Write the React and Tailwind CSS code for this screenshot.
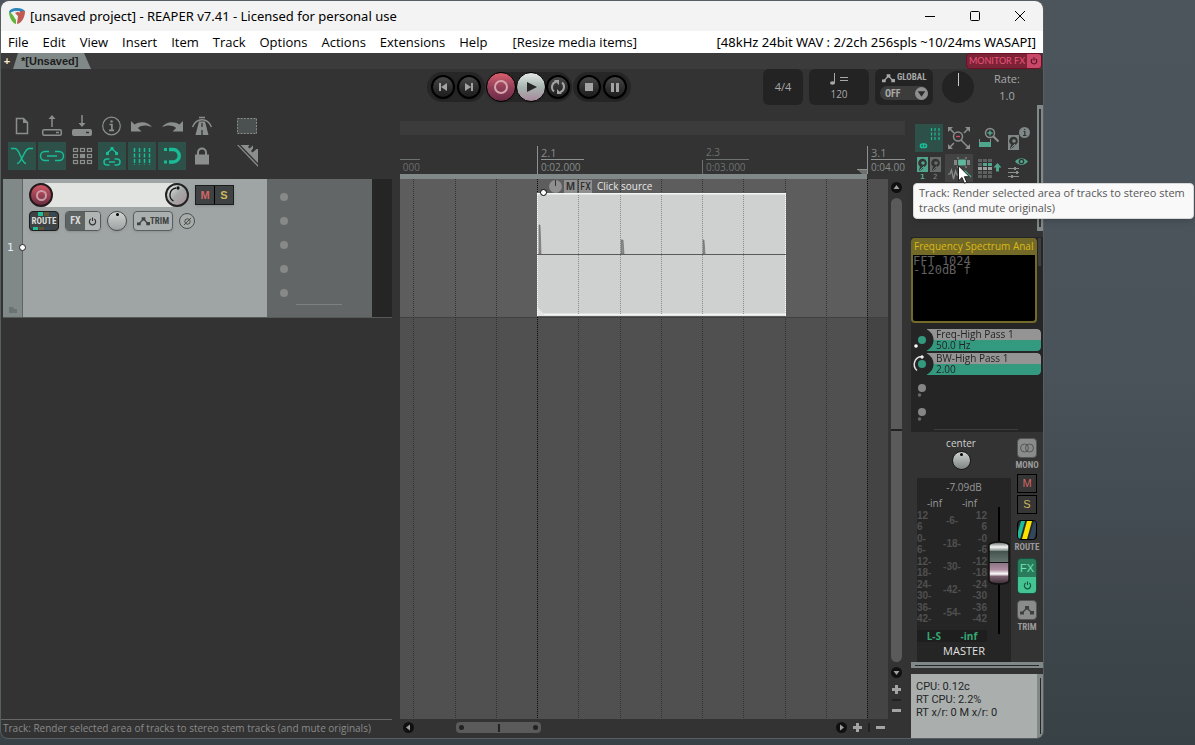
import React, { useState } from 'react';

// ============================================================================
// SHARED DATA
// ============================================================================
const MENUS = ['File', 'Edit', 'View', 'Insert', 'Item', 'Track', 'Options', 'Actions', 'Extensions', 'Help'];
const GRID = [13, 55, 96, 137, 178, 220, 261, 302, 343, 385, 426, 467];
const SCALE_LEFT = ['12', '6', '0-', '6-', '12-', '18-', '24-', '30-', '36-', '42-'];
const SCALE_MID = ['-6-', '-18-', '-30-', '-42-', '-54-'];
const SCALE_RIGHT = ['12', '6', '-0', '-6', '-12', '-18', '-24', '-30', '-36', '-42'];

const UI = "font-['Open_Sans',sans-serif]";
const NARROW = "font-['Liberation_Sans_Narrow','Roboto_Condensed','Open_Sans_Condensed','DejaVu_Sans_Condensed',sans-serif]";

// ============================================================================
// ICONS
// ============================================================================
const Icon = ({ children }) => (
    <svg viewBox="0 0 28 28" className="block h-7 w-7" fill="none" stroke="currentColor" strokeWidth="1.5" aria-hidden="true">
        {children}
    </svg>
);

const icons = {
    newFile: <Icon><path d="M8.5 6.5h7l4 4v11h-11z" /><path d="M15 6v5h5z" fill="currentColor" stroke="none" /></Icon>,
    open: (
        <Icon>
            <rect x="4.7" y="17.7" width="18.6" height="5.6" rx="1.5" />
            <path d="M14 15V6M18 20.5h3" /><path d="M14 3l-3.5 4h7z" fill="currentColor" stroke="none" />
        </Icon>
    ),
    save: (
        <Icon>
            <rect x="4" y="17" width="20" height="7" rx="2" fill="currentColor" stroke="none" />
            <path d="M14 3v9" /><path d="M14 15l-3.5-4h7z" fill="currentColor" stroke="none" /><path d="M18 20.5h3" stroke="#333" />
        </Icon>
    ),
    info: (
        <Icon>
            <circle cx="13.5" cy="14" r="8.8" strokeWidth="1.2" />
            <path d="M11.5 12.5h2.4v5.5M11 18.4h5" strokeWidth="1.7" /><circle cx="13.6" cy="9.4" r="1.2" fill="currentColor" stroke="none" />
        </Icon>
    ),
    undo: <Icon><path d="M3 9v10.500h10.500l-3.600-3.600c4-3.200 9-3 14.100-.9c-4-5.500-12-6.300-17.400-2.400z" fill="currentColor" stroke="none" /></Icon>,
    redo: <Icon><path d="M25 9v10.500h-10.500l3.600-3.600c-4-3.200-9-3-14.100-.9c4-5.500 12-6.300 17.400-2.400z" fill="currentColor" stroke="none" /></Icon>,
    metronome: (
        <Icon>
            <path d="M11 9.500h6l3.500 13.500h-13z" fill="currentColor" stroke="none" />
            <path d="M14 11v4M14 18v5" stroke="#333" strokeWidth="1.3" />
            <path d="M11 5.500h6M4.500 15c2-5 5-7.300 9.500-7.300s7.500 2.300 9.500 7.300" strokeWidth="1.400" />
        </Icon>
    ),
    marquee: <Icon><rect x="4.500" y="6.500" width="19" height="15" fill="#4b5150" strokeWidth="1" strokeDasharray="2 1.200" /></Icon>,
    crossfade: <Icon><path d="M3 6.500h4c5 0 6 15 11 15M25 6.500h-4c-5 0-7 15-12 15" /></Icon>,
    link: <Icon><path d="M11 9.500H7a4.200 4.200 0 000 9h4M17 9.500h4a4.200 4.200 0 010 9h-4M9 14h10" /></Icon>,
    matrix: (
        <Icon>
            {[6, 12, 18].map((y) => [5, 12, 19].map((x) => (
                <rect key={`${x}-${y}`} x={x + 0.5} y={y + 0.5} width="4" height="3" strokeWidth="1.200" fill={x === 12 && y === 12 ? 'currentColor' : 'none'} />
            )))}
        </Icon>
    ),
    envelope: (
        <Icon>
            <path d="M9 11l5-4 5 4" /><path d="M8 10h3v3H8zM12.500 5h3v3h-3zM17 10h3v3h-3z" fill="currentColor" stroke="none" />
            <path d="M11.500 17H9a3 3 0 000 6h2.500M16.500 17H19a3 3 0 010 6h-2.500M11 20h6" />
        </Icon>
    ),
    grid: <Icon><path d="M6.500 6v17M11.500 6v17M16.500 6v17M21.500 6v17" strokeDasharray="4 1.500" /></Icon>,
    snap: <Icon><path d="M11 7.500h4a6.200 6.200 0 010 12.500h-4" strokeWidth="3.400" /><path d="M6 6h3v3H6zM6 18.500h3v3H6z" fill="currentColor" stroke="none" /></Icon>,
    lock: <Icon><rect x="7" y="12.500" width="14" height="10" fill="currentColor" stroke="none" /><path d="M10 13v-2.500a4 4 0 018 0V13" strokeWidth="2" /></Icon>,
    ruler: (
        <Icon>
            <path d="M7.500 3h9l-1.500 2 1.500 1.500 3.500-3v3l-2 2.500 1.500 1.500 4-3.500h1.500v14z" fill="currentColor" stroke="none" />
            <path d="M4 3h1.500L25 23v2z" fill="currentColor" stroke="none" />
        </Icon>
    ),
};

const Disk = ({ x, y, color }) => (
    <g transform={`translate(${x} ${y})`} stroke="none">
        <rect width="11" height="15" fill={color} />
        <circle cx="5.500" cy="6" r="4.300" fill="#333" />
        <circle cx="6" cy="6" r="1.800" fill={color} />
        <path d="M2 13.500l1-4 3.500 1.500-3 2.500z" fill="#333" />
        <path d="M3 13l4-4" stroke={color} strokeWidth="1" />
    </g>
);

const dockIcons = {
    gridLink: (
        <Icon>
            <path d="M16.500 4v12M20 4v12M24 4v12" strokeDasharray="3 1.500" stroke="#1abc98" strokeWidth="1.200" />
            <rect x="5.500" y="20" width="6" height="3.500" rx="1.700" stroke="#1abc98" strokeWidth="1.700" /><path d="M8.500 20v4" stroke="#1abc98" />
        </Icon>
    ),
    zoomOut: (
        <Icon>
            <circle cx="13" cy="12.500" r="4.500" /><path d="M11 12.500h4" stroke="#d04a65" strokeWidth="1.300" />
            <path d="M16 16l3.500 3.500M4 4l5 5M24 4l-5 5M4 24l5-5M24 24l-5-5" />
            <path d="M3 3h5l-5 5zM25 3h-5l5 5zM3 25h5l-5-5zM25 25h-5l5-5z" fill="currentColor" stroke="none" />
        </Icon>
    ),
    zoomIn: (
        <Icon>
            <circle cx="15" cy="9" r="4.500" /><path d="M12.500 9h5M15 6.500v5" stroke="#50a58d" />
            <path d="M18.500 12.500l5 5" strokeWidth="2.200" /><path d="M4.500 15v3M15.500 15v3" strokeWidth="1" />
            <rect x="4" y="18" width="12" height="5" fill="#50a58d" stroke="none" />
        </Icon>
    ),
    diskInfo: (
        <Icon>
            <Disk x={3} y={11} color="#7f8886" /><circle cx="19.500" cy="8.500" r="5.500" fill="#7f8886" stroke="none" />
            <path d="M18.500 7.500h1.300v4M18 11.500h3.500M19 5.500h1.200" stroke="#333" strokeWidth="1.200" />
        </Icon>
    ),
    disks: (
        <Icon>
            <Disk x={2} y={3} color="#50a58d" /><Disk x={15} y={3} color="#666c6a" />
            <text x="5" y="25" fontSize="7" fontFamily="DejaVu Sans" fontWeight="bold" fill="#50a58d" stroke="none">1</text>
            <text x="18" y="25" fontSize="7" fontFamily="DejaVu Sans" fill="#888" stroke="none">2</text>
        </Icon>
    ),
    render: (
        <Icon>
            <rect x="9" y="6" width="16" height="5" fill="#7f8886" stroke="none" /><rect x="13.500" y="5.500" width="7" height="6" fill="#5bb89d" stroke="none" />
            <path d="M12.500 6v5M21.500 6v5" stroke="#434343" strokeWidth="1" />
            <path d="M13 3v2M13 12v2M21 3v2M21 12v2" strokeWidth="1.200" />
            <path d="M3 20h2l1.500-4 2 9 2-8 1.500 4h3" strokeWidth="1.200" />
            <path d="M17 19c5-5 5 5 9 3" stroke="#50a58d" strokeWidth="2" />
        </Icon>
    ),
    list: (
        <Icon>
            {[5, 9, 13, 17, 21].map((y, i) => [3, 8, 13].map((x) => (
                <rect key={`${x}-${y}`} x={x} y={y} width="4" height="3" stroke="none" fill={i === 1 && x > 3 ? '#50a58d' : i === 2 ? '#9a9f9e' : '#5c6160'} />
            )))}
            <path d="M22.500 9l-4 4.500h2.500v4h3v-4h2.500z" fill="#50a58d" stroke="none" />
        </Icon>
    ),
    visible: (
        <Icon>
            <path d="M10 7.500c4-4.500 9-4.500 13 0c-4 4.500-9 4.500-13 0z" fill="#50a58d" stroke="none" /><circle cx="16.500" cy="7.500" r="2.800" fill="#333" stroke="none" />
            <circle cx="16.500" cy="7.500" r="1.500" fill="#50a58d" stroke="none" />
            <path d="M3 14.500h11M3 18.500h11M3 22.500h11" strokeWidth="1.200" /><path d="M9 13h2v3H9zM11 17h2v3h-2zM6 21h2v3H6z" fill="currentColor" stroke="none" />
        </Icon>
    ),
};

const Power = ({ className }) => (
    <svg viewBox="0 0 10 10" className={className} fill="none" stroke="currentColor" strokeWidth="1.300" aria-hidden="true">
        <path d="M3 2.300a3.500 3.500 0 104 0M5 .5v4" />
    </svg>
);

const Trim = ({ className }) => (
    <svg viewBox="0 0 14 10" className={className} aria-hidden="true">
        <path d="M2 8l5-5 5 5" fill="none" stroke="currentColor" strokeWidth="1.300" />
        <path d="M0 6.500h4v3H0zM5 1h4v3.500H5zM10 6h4v3.500h-4z" fill="currentColor" />
    </svg>
);

const Logo = () => (
    <svg viewBox="0 0 16 16" className="h-4 w-4" aria-hidden="true">
        <path d="M0 4C1 1 4 0 8 0s6 1 8 3l-3 3C9 3 5 3 1 6z" fill="#2c86b8" />
        <path d="M0 4c2 0 4 3 7 8v4C3 15 0 9 0 4z" fill="#62b53a" />
        <path d="M16 3c0 6-3 12-8 13L9 8l-3-3c4-2 7-2 10-2z" fill="#bf5b50" />
        <path d="M2 5c3-2 6-2 9-1" stroke="#fff" strokeWidth="1" fill="none" />
    </svg>
);

// ============================================================================
// TITLE BAR AND MENU
// ============================================================================
const TitleBar = () => (
    <header className="flex h-[30px] items-center bg-[#f3f3f3] pl-2 text-black">
        <Logo />
        <h1 className="ml-[5px] flex-1 whitespace-nowrap font-['Noto_Sans',sans-serif] text-[13px] leading-5">[unsaved project] - REAPER v7.41 - Licensed for personal use</h1>
        <div className="flex">
            <button aria-label="Minimize" className="grid h-7 w-[45px] place-items-center">
                <svg viewBox="0 0 12 12" className="h-3 w-3" stroke="currentColor"><path d="M1 6.500h10" /></svg>
            </button>
            <button aria-label="Maximize" className="grid h-7 w-[45px] place-items-center">
                <svg viewBox="0 0 12 12" className="h-3 w-3" stroke="currentColor" fill="none"><rect x="1.500" y="1.500" width="9" height="9" rx="1" /></svg>
            </button>
            <button aria-label="Close" className="grid h-7 w-[46px] place-items-center">
                <svg viewBox="0 0 12 12" className="h-3 w-3" stroke="currentColor"><path d="M1 1l10 10M11 1L1 11" /></svg>
            </button>
        </div>
    </header>
);

const MenuBar = () => (
    <nav className={`flex h-[22px] items-center gap-[14px] whitespace-nowrap bg-white px-[7px] text-[13px] leading-5 text-black ${UI}`}>
        {MENUS.map((m) => <button key={m}>{m}</button>)}
        <button className="ml-[11px]">[Resize media items]</button>
        <button className="ml-auto font-['Noto_Sans',sans-serif]">[48kHz 24bit WAV : 2/2ch 256spls ~10/24ms WASAPI]</button>
    </nav>
);

const TabBar = () => (
    <div className="flex h-4 items-stretch bg-[#3b3b3b]">
        <button aria-label="New project tab" className="w-3 text-center text-[11px] font-bold leading-4 text-[#ffe9c8]">+</button>
        <button className="h-4 w-[78px] bg-[#808987] pl-2 text-left font-['Liberation_Sans',sans-serif] text-[11px] font-bold leading-4 text-[#1c1c1c] [clip-path:polygon(5px_0,71px_0,100%_100%,0_100%)]">
            *[Unsaved]
        </button>
        <div className="ml-auto mr-px flex overflow-hidden rounded-sm border border-[#6d0f26] bg-[#7c2338] text-[#e8557a]">
            <button className="px-[2px] font-['Lato',sans-serif] text-[9px] leading-[14px]">MONITOR FX</button>
            <button aria-label="Monitor FX bypass" className="grid w-[14px] place-items-center bg-[#c8486a] text-[#4e0c1c]"><Power className="h-2 w-2" /></button>
        </div>
    </div>
);

// ============================================================================
// TRANSPORT
// ============================================================================
const RoundButton = ({ label, big, tone, children }) => (
    <button
        aria-label={label}
        className={`grid shrink-0 place-items-center rounded-full border-black shadow ${big ? 'h-[30px] w-[30px] border' : 'h-6 w-6 border-2'} ${tone || 'bg-gradient-to-b from-[#464646] to-[#1c1c1c] text-[#a3a3a3]'}`}
    >
        {children}
    </button>
);

const Transport = () => (
    <div className="flex h-9 items-center">
        <div className="ml-[426px] flex h-[30px] items-center gap-[2px] rounded-full bg-[#262626] px-1">
            <RoundButton label="Go to start"><svg viewBox="0 0 10 10" className="h-[10px] w-[10px]" fill="currentColor"><path d="M1 1h2v8H1zM9 1v8L3 5z" /></svg></RoundButton>
            <RoundButton label="Go to end"><svg viewBox="0 0 10 10" className="h-[10px] w-[10px]" fill="currentColor"><path d="M7 1h2v8H7zM1 1v8l6-4z" /></svg></RoundButton>
        </div>
        <div className="ml-px flex h-[30px] items-center rounded-full bg-[#262626] pr-[2px]">
            <RoundButton label="Record" big tone="bg-gradient-to-b from-[#d9606c] via-[#93405a] to-[#6a2b45] text-[#d7a5ae]">
                <svg viewBox="0 0 16 16" className="h-4 w-4" fill="none" stroke="currentColor" strokeWidth="2"><circle cx="8" cy="8" r="6" /></svg>
            </RoundButton>
            <RoundButton label="Play" big tone="bg-gradient-to-b from-[#e6eae8] via-[#a7b5b0] to-[#a88a9c] text-[#262626]">
                <svg viewBox="0 0 12 12" className="h-3 w-3" fill="currentColor"><path d="M2 1l10 5-10 5z" /></svg>
            </RoundButton>
            <RoundButton label="Repeat">
                <svg viewBox="0 0 16 16" className="h-4 w-4" fill="none" stroke="currentColor" strokeWidth="2">
                    <path d="M4 12.500A5.600 5.600 0 016 2.800M12 3.500a5.600 5.600 0 01-2 9.700" /><path d="M4 1h5v5zM12 15H7v-5z" fill="currentColor" stroke="none" />
                </svg>
            </RoundButton>
        </div>
        <div className="ml-px flex h-[30px] items-center gap-[2px] rounded-full bg-[#262626] px-1">
            <RoundButton label="Stop"><span className="h-2 w-2 bg-current" /></RoundButton>
            <RoundButton label="Pause"><span className="h-[9px] w-2 border-x-[3px] border-current" /></RoundButton>
        </div>
        <div className={`ml-auto mr-[20px] flex items-center gap-[6px] text-[#a8a8a8] ${UI}`}>
            <button className="h-9 w-10 rounded-md bg-[#232323] text-[11px]">4/4</button>
            <button className="flex h-9 w-[60px] flex-col items-center rounded-md bg-[#232323] pt-1 text-[10px] leading-[14px]">
                <svg viewBox="0 0 20 12" className="h-3 w-5" fill="none" stroke="currentColor" aria-hidden="true">
                    <path d="M5.500 0v10M11 4.500h8M11 7.500h8" /><ellipse cx="3.500" cy="10" rx="2.500" ry="1.800" fill="currentColor" stroke="none" />
                </svg>
                <span className="pt-[2px]">120</span>
            </button>
            <div className={`flex h-9 w-[58px] flex-col rounded-md bg-[#232323] px-[5px] pt-[2px] text-[10px] font-bold leading-[13px] ${NARROW}`}>
                <span className="flex items-center gap-[2px] pl-[2px] text-[9px]"><Trim className="h-[10px] w-[13px]" />GLOBAL</span>
                <button className="mt-[2px] flex h-[14px] items-center justify-between rounded-full bg-[#3c3c3c] pl-[5px]">
                    OFF
                    <svg viewBox="0 0 12 12" className="h-[13px] w-[13px]" aria-hidden="true"><circle cx="6" cy="6" r="6" fill="#8f8f8f" /><path d="M2.500 4h7L6 9z" fill="#2b2b2b" /></svg>
                </button>
            </div>
            <button aria-label="Play rate knob" className="ml-[3px] flex h-8 w-8 justify-center rounded-full bg-[#232323] pt-[2px]"><span className="h-[13px] w-px bg-[#c8c8c8]" /></button>
            <div className="ml-[11px] w-8 text-center text-[11px] leading-[17px]">
                <p>Rate:</p>
                <p>1.0</p>
            </div>
        </div>
    </div>
);

// ============================================================================
// MAIN TOOLBAR
// ============================================================================
const ToolButton = ({ name, label, active, className = '' }) => (
    <button aria-label={label} className={`h-7 w-7 ${active ? 'bg-[#2d5148] text-[#1abc98]' : 'text-[#8a8f8e]'} ${className}`}>
        {icons[name]}
    </button>
);

const Toolbar = () => (
    <div className="flex flex-col gap-[2px] pb-[9px] pl-[7px] pt-[7px]">
        <div className="flex gap-[2px]">
            <ToolButton name="newFile" label="New project" />
            <ToolButton name="open" label="Open project" />
            <ToolButton name="save" label="Save project" />
            <ToolButton name="info" label="Project settings" />
            <ToolButton name="undo" label="Undo" />
            <ToolButton name="redo" label="Redo" />
            <ToolButton name="metronome" label="Metronome" />
            <ToolButton name="marquee" label="Marquee selection" className="ml-[15px]" />
        </div>
        <div className="flex gap-[2px]">
            <ToolButton name="crossfade" label="Auto-crossfade" active />
            <ToolButton name="link" label="Item grouping" active />
            <ToolButton name="matrix" label="Ripple editing" />
            <ToolButton name="envelope" label="Move envelope points" active />
            <ToolButton name="grid" label="Grid lines" active />
            <ToolButton name="snap" label="Snap" active />
            <ToolButton name="lock" label="Locking" />
            <ToolButton name="ruler" label="Razor edit" className="ml-[15px]" />
        </div>
    </div>
);

// ============================================================================
// TRACK PANEL
// ============================================================================
const TrackPanel = () => {
    const [name, setName] = useState('');
    return (
        <section className="ml-[2px] mr-2 flex h-[139px] border-b border-[#555a59]">
            <div className="relative flex w-[19px] flex-col justify-between bg-[#808987] pb-1">
                <span className="pl-1 pt-[61px] font-['DejaVu_Sans',sans-serif] text-[11px] leading-4 text-[#e4ecf8]">1</span>
                <svg viewBox="0 0 8 6" className="ml-[6px] h-[6px] w-2" aria-hidden="true"><path d="M0 0h4l1 2h3v4H0z" fill="#6a7371" /></svg>
                <span className="absolute -right-1 top-[65px] h-[7px] w-[7px] rounded-full border border-[#222] bg-white" />
            </div>
            <div className="flex-1 border-l border-[#5f6463] bg-[#9fa5a4] pl-[6px] pt-1">
                <div className="flex items-center">
                    <button aria-label="Record arm" className="relative z-10 grid h-6 w-6 shrink-0 place-items-center rounded-full border-2 border-[#251a1e] bg-gradient-to-b from-[#d25766] to-[#6a2f42]">
                        <span className="h-[11px] w-[11px] rounded-full border-2 border-[#c99ba6]" />
                    </button>
                    <input aria-label="Track name" value={name} onChange={(e) => setName(e.target.value)} className="-mx-2 h-6 w-32 bg-[#e2e4e2] px-3 text-xs outline-none" />
                    <button aria-label="Track volume" className="relative h-6 w-6 shrink-0 rounded-full border-2 border-[#232323] bg-gradient-to-br from-[#f0f4f2] via-[#a5a9a8] to-[#a88f98]">
                        <svg viewBox="0 0 20 20" className="h-5 w-5" fill="none" stroke="#111" strokeWidth="1.300"><path d="M9 3a7 7 0 00-2.500 13" /><circle cx="11" cy="3" r="1" fill="#111" /></svg>
                    </button>
                    <div className="ml-[6px] flex h-5 border border-[#1c1e1e] bg-[#3e4242] text-[11px] font-bold leading-[18px] shadow">
                        <button className="w-[19px] border-r border-black text-[#d56565]">M</button>
                        <button className="w-[18px] text-[#cdb95c]">S</button>
                    </div>
                </div>
                <div className={`mt-1 flex items-center gap-[6px] text-[10px] font-bold leading-[18px] ${NARROW}`}>
                    <button className="relative h-5 w-[30px] overflow-hidden rounded-sm border border-[#1c1e1e] bg-[#3e4242] text-[9px] text-[#d9dcdb] shadow">
                        <span className="absolute left-2 top-0 h-1 w-[5px] bg-[#20bd9b]" />
                        <span className="absolute left-[14px] top-0 h-1 w-[5px] bg-[#5f5532]" />
                        <span className="absolute left-5 top-0 h-1 w-[5px] bg-[#34495a]" />
                        <span className="absolute bottom-0 left-[3px] h-[3px] w-[5px] bg-[#20bd9b]" />
                        <span className="absolute bottom-0 left-[9px] h-[3px] w-[5px] bg-[#5f5532]" />
                        <span className="absolute bottom-0 left-[15px] h-[3px] w-[5px] bg-[#34495a]" />
                        <span className="relative">ROUTE</span>
                    </button>
                    <div className="flex h-5 overflow-hidden rounded-sm border border-[#555a59] shadow">
                        <button className="w-[19px] bg-[#5d6262] text-[#d9dcdb]">FX</button>
                        <button aria-label="FX bypass" className="grid w-[15px] place-items-center bg-[#b1b6b5] text-[#333]"><Power className="h-[9px] w-[9px]" /></button>
                    </div>
                    <button aria-label="Track pan" className="flex h-5 w-5 justify-center rounded-full border border-[#4a4f4e] bg-gradient-to-b from-[#d0d5d3] to-[#9da3a1] pt-[1px] shadow"><span className="h-[3px] w-[3px] rounded-full bg-black" /></button>
                    <button className="flex h-5 w-10 items-center justify-center rounded-sm border border-[#5a5f5e] bg-[#aab0af] text-[9px] text-[#3f4443] shadow"><Trim className="h-[10px] w-[13px]" />TRIM</button>
                    <button aria-label="Phase invert" className="grid h-4 w-4 place-items-center rounded-full border border-[#4a4f4e] bg-[#a7adab] text-[#3f4443]">
                        <svg viewBox="0 0 10 10" className="h-[9px] w-[9px]" fill="none" stroke="currentColor"><circle cx="5" cy="5" r="3" /><path d="M1 9l8-8" /></svg>
                    </button>
                </div>
            </div>
            <div className="flex w-[105px] flex-col bg-[#626666] pl-[13px] pt-[14px]">
                <div className="flex flex-col gap-4">
                    {[0, 1, 2, 3, 4].map((n) => <span key={n} className="h-2 w-2 rounded-full bg-[#878988]" />)}
                </div>
                <span className="ml-4 mt-[7px] h-px w-[46px] bg-[#7b8180]" />
            </div>
            <div className="w-5 bg-[#252525]" />
        </section>
    );
};

// ============================================================================
// TIMELINE
// ============================================================================
const Ruler = () => (
    <div className={`flex h-7 overflow-hidden text-[10px] text-[#878c8a] ${UI}`}>
        <div className="w-[137px] shrink-0 pt-[13px]"><p className="w-5 border-t border-[#6c7170] text-right leading-[14px] text-[#6c6c6c]">000</p></div>
        <div className="w-[165px] shrink-0 border-l border-[#8d9290] pl-[3px]">
            <p className="w-[43px] border-b border-[#8d9290] text-[11px] leading-[13px]">2.1</p>
            <p className="leading-[14px]">0:02.000</p>
        </div>
        <div className="flex w-[165px] shrink-0 items-end">
            <span className="h-[14px] w-px bg-[#6c7170]" />
            <div className="h-7 pl-[3px] text-[#6c7170]">
                <p className="w-[43px] border-b border-[#6c7170] leading-[13px]">2.3</p>
                <p className="leading-[14px]">0:03.000</p>
            </div>
            <svg viewBox="0 0 10 5" className="ml-auto h-[5px] w-[10px]" aria-hidden="true"><path d="M0 0h10v5H5z" fill="#6c7170" /><path d="M0 .5h10" stroke="#8d9290" /></svg>
        </div>
        <div className="min-w-0 flex-1 border-l border-[#8d9290] pl-[3px]">
            <p className="border-b border-[#8d9290] text-[11px] leading-[13px]">3.1</p>
            <p className="leading-[14px]">0:04.000</p>
        </div>
    </div>
);

const MediaItem = () => (
    <div className="absolute left-[137px] top-0 w-[249px]">
        <div className={`flex h-[14px] items-center gap-[2px] pl-3 text-[10px] text-[#e8e8e8] ${UI}`}>
            <button aria-label="Item volume" className="flex h-[13px] w-[13px] justify-center rounded-full bg-[#8f8f8f]"><span className="h-[6px] w-px bg-[#333]" /></button>
            <button className="h-[13px] w-[13px] bg-[#8f8f8f] text-[10px] font-bold leading-[13px] text-[#333]">M</button>
            <button className={`h-[13px] w-[13px] bg-[#8f8f8f] text-[10px] leading-[13px] text-[#222] ${NARROW}`}>FX</button>
            <span className="pl-[3px]">Click source</span>
        </div>
        <svg viewBox="0 0 249 123" className="block h-[123px] w-full" aria-hidden="true">
            <rect width="249" height="123" fill="#cfd1d0" />
            <path d="M0 .5h249M0 121.500h249" stroke="#f3f4f4" strokeWidth="2" />
            <path d="M0 114l8 8H0z" fill="#e4e6e5" />
            <path d="M0 61.500h249" stroke="#5a5a5a" />
            <path d="M2 61V32h1l1 29zM84 61V47h2l1 14zM166 61V47h1l1 14z" fill="#8a8a8a" stroke="#666" strokeWidth=".6" />
            <path d="M41.500 2v119M83.500 2v119M124.500 2v119M165.500 2v119M206.500 2v119" stroke="#8a8c8b" strokeDasharray="1 1" />
            <path d="M.5 0v123M248.500 0v123" stroke="#fff" strokeDasharray="1 1" />
        </svg>
        <span className="absolute left-[3px] top-[10px] h-[7px] w-[7px] rounded-full border-[1.5px] border-black bg-white" />
    </div>
);

const ScrollArrow = ({ d, label, className = '' }) => (
    <button aria-label={label} className={`h-[11px] w-[11px] shrink-0 rounded-full bg-[#101010] ${className}`}>
        <svg viewBox="0 0 11 11" className="h-[11px] w-[11px]" fill="#a0a0a0"><path d={d} /></svg>
    </button>
);

const ZoomButton = ({ plus }) => (
    <button aria-label={plus ? 'Zoom in' : 'Zoom out'} className="shrink-0">
        <svg viewBox="0 0 9 9" className="h-[9px] w-[9px]" fill="#a3a3a3"><path d={plus ? 'M3 0h3v3h3v3H6v3H3V6H0V3h3z' : 'M0 3h9v3H0z'} /></svg>
    </button>
);

const Arrange = () => (
    <main className="flex min-w-0 flex-1 flex-col">
        <div className="mr-[5px] mt-4 h-[14px] bg-[#3b3b3b]" />
        <div className="mr-[5px] mt-[11px]"><Ruler /></div>
        <div className="flex">
            <div className="h-[5px] w-[467px] bg-[#808987]" />
        </div>
        <div className="flex flex-1">
            <div className="relative min-w-0 flex-1 overflow-hidden bg-[#505050]">
                <div className="h-[139px] border-b border-[#404040] bg-[#5d5d5d]" />
                <svg className="absolute inset-0 h-full w-full" aria-hidden="true">
                    <rect x="467" width="100%" height="138" fill="#505050" />
                    <rect x="467" y="139" width="100%" height="100%" fill="#444444" />
                    {GRID.map((x) => (
                        <line key={x} x1={x + 0.5} x2={x + 0.5} y1="0" y2="100%" stroke={x === 137 || x === 467 ? '#0c0c0c' : '#333333'} strokeDasharray="1 1" />
                    ))}
                </svg>
                <MediaItem />
            </div>
            <div className="flex w-[22px] flex-col items-center gap-[5px] pb-1 pr-[5px] pt-[3px]">
                <ScrollArrow label="Scroll up" d="M5.500 3l3 4h-6z" />
                <div className="flex w-[11px] flex-1 items-center rounded-full bg-[#5a5a5a]"><span className="h-[2px] w-full bg-[#222]" /></div>
                <ScrollArrow label="Scroll down" d="M5.500 8l3-4h-6z" className="mb-[2px]" />
                <ZoomButton plus />
                <span className="h-[2px] w-[9px] bg-[#222]" />
                <ZoomButton />
            </div>
        </div>
        <div className="flex h-[19px] items-center gap-[6px] pb-[2px] pl-[3px] pr-[25px]">
            <ScrollArrow label="Scroll left" d="M3 5.500l4-3v6z" />
            <div className="ml-9 flex h-[11px] w-[85px] items-center justify-between rounded bg-[#5a5a5a] px-[3px]">
                <span className="h-[5px] w-[5px] rounded-full bg-[#222]" />
                <span className="h-2 w-[2px] bg-[#222]" />
                <span className="h-[5px] w-[5px] rounded-full bg-[#222]" />
            </div>
            <span className="flex-1" />
            <ScrollArrow label="Scroll right" d="M8 5.500l-4-3v6z" />
            <ZoomButton plus />
            <span className="h-[9px] w-[2px] bg-[#222]" />
            <ZoomButton />
        </div>
    </main>
);

// ============================================================================
// RIGHT DOCK
// ============================================================================
const DockToolbar = () => (
    <div className="relative flex h-[126px] justify-between">
        <div className="grid grid-cols-4 content-start gap-[2px] pl-[5px] pt-[19px]">
            <button aria-label="Grid link" className="h-7 w-7 bg-[#2d5148]">{dockIcons.gridLink}</button>
            <button aria-label="Zoom out project" className="h-7 w-7 text-[#8a8f8e]">{dockIcons.zoomOut}</button>
            <button aria-label="Zoom to selection" className="h-7 w-7 text-[#8a8f8e]">{dockIcons.zoomIn}</button>
            <button aria-label="Media info" className="h-7 w-7 text-[#8a8f8e]">{dockIcons.diskInfo}</button>
            <button aria-label="Swap takes" className="h-7 w-7 text-[#8a8f8e]">{dockIcons.disks}</button>
            <button aria-label="Render selected area" aria-describedby="tip" className="h-7 w-7 bg-[#434343] text-[#8a8f8e]">{dockIcons.render}</button>
            <button aria-label="Move tracks up" className="h-7 w-7 text-[#8a8f8e]">{dockIcons.list}</button>
            <button aria-label="Show controls" className="h-7 w-7 text-[#8a8f8e]">{dockIcons.visible}</button>
        </div>
        <div className="flex w-[6px] justify-center bg-[#808987] py-1"><span className="w-[2px] bg-[#2f3333]" /></div>
        <p id="tip" role="tooltip" className={`absolute left-[3px] top-[78px] z-10 h-9 w-[281px] rounded-sm border border-[#d8d8d8] bg-[#f9f9f9] pl-[5px] pt-px text-[11px] leading-[15px] text-[#575757] shadow-md ${UI}`}>
            Track: Render selected area of tracks to stereo stem tracks (and mute originals)
        </p>
        <svg viewBox="0 0 12 19" className="absolute left-[48px] top-[60px] z-20 h-[19px] w-3" aria-hidden="true">
            <path d="M.5 .8v15l3.500-3.300 2.400 5.700 2.400-1-2.400-5.500h5z" fill="#fff" stroke="#111" strokeWidth=".9" />
        </svg>
    </div>
);

const FxKnob = ({ name, value, turned }) => (
    <div className="flex h-[22px]">
        <svg viewBox="0 0 22 22" className="h-[22px] w-[22px] shrink-0" aria-hidden="true">
            <circle cx="11" cy="11" r="4" fill="#339a80" />
            {turned
                ? <g fill="none" stroke="#ddd"><path d="M6 17.500A8 8 0 0110.500 3.500" strokeWidth="1.500" /><circle cx="11" cy="4" r="1.300" fill="#fff" /></g>
                : <circle cx="5" cy="17" r="1.800" fill="#fff" />}
        </svg>
        <div className={`-ml-[6px] flex-1 rounded-r-sm text-[10px] leading-[11px] text-[#242424] ${UI} [mask-image:radial-gradient(circle_at_-5px_11px,transparent_11px,black_12px)]`}>
            <p className="rounded-tr-sm bg-[#949494] pl-[9px]">{name}</p>
            <p className="rounded-br-sm bg-[#339a80] pl-[9px]">{value}</p>
        </div>
    </div>
);

const FxPanel = () => (
    <section className="ml-px mt-[6px] h-[195px] bg-[#252525] pt-px">
        <div className="flex justify-between pr-[2px]">
            <div className="w-[126px] rounded-sm border-2 border-t-0 border-[#736a28] bg-black">
                <h2 className={`h-[17px] whitespace-nowrap bg-[#736a28] pl-px text-[10px] leading-[17px] text-[#dcb914] ${UI}`}>Frequency Spectrum Anal</h2>
                <p className="h-[66px] whitespace-pre pt-[2px] font-['DejaVu_Sans_Mono',monospace] text-[12px] leading-[9px] text-[#606060]">{'FFT 1024\n-120dB f'}</p>
            </div>
            <span className="h-7 w-[3px] bg-[#3e3e3e]" />
        </div>
        <div className="mt-[6px] flex flex-col gap-[2px] pr-[2px]">
            <FxKnob name="Freq-High Pass 1" value="50.0 Hz" />
            <FxKnob name="BW-High Pass 1" value="2.00" turned />
            {[0, 1].map((n) => (
                <svg key={n} viewBox="0 0 22 22" className="h-[22px] w-[22px]" aria-hidden="true"><circle cx="11" cy="11" r="4" fill="#858585" /><circle cx="8.500" cy="18" r="1.700" fill="#6a6a6a" /></svg>
            ))}
        </div>
        <div className="ml-[23px] mt-[6px] h-px w-[84px] bg-[#3e3e3e]" />
    </section>
);

const Fader = () => {
    const [level, setLevel] = useState(50);
    return (
        <label className="relative mt-[29px] flex h-[127px] w-6 justify-center">
            <span className="h-full w-[2px] bg-black" />
            <svg viewBox="0 0 22 44" className="absolute left-px top-[34px] h-11 w-[22px]" aria-hidden="true">
                <defs>
                    <linearGradient id="cap" x1="0" x2="0" y1="0" y2="1">
                        <stop offset="0" stopColor="#5c6462" /><stop offset=".12" stopColor="#f2f5f3" /><stop offset=".2" stopColor="#8b9692" />
                        <stop offset=".22" stopColor="#44534e" /><stop offset=".48" stopColor="#66756f" /><stop offset=".5" stopColor="#8d7585" />
                        <stop offset=".66" stopColor="#ac8ea0" /><stop offset=".76" stopColor="#fff" /><stop offset=".82" stopColor="#7d6270" /><stop offset="1" stopColor="#382b33" />
                    </linearGradient>
                </defs>
                <path d="M1 4q2-3 10-3t10 3v36q-2 3-10 3t-10-3z" fill="url(#cap)" stroke="#111" strokeWidth="1.500" /><path d="M1 21.500h20" stroke="#111" />
            </svg>
            <input type="range" aria-label="Master volume" value={level} onChange={(e) => setLevel(e.target.value)} className="absolute inset-0 h-full w-full opacity-0 [writing-mode:vertical-lr]" />
        </label>
    );
};

const SmallLabel = ({ children }) => <span className={`text-[9px] font-bold leading-[14px] text-[#9a9a9a] ${NARROW}`}>{children}</span>;

const Master = () => (
    <section className="flex h-[230px] pl-[7px] pr-[3px]">
        <div className="flex w-[94px] flex-col">
            <div className={`flex h-[46px] shrink-0 flex-col items-center pr-[6px] pt-1 text-[10px] leading-[14px] text-[#d0d0d0] ${UI}`}>
                center
                <button aria-label="Master pan" className="mt-px flex h-[19px] w-[19px] justify-center rounded-full border border-[#191919] bg-gradient-to-b from-[#cdd2d0] to-[#7e8482] pt-px"><span className="h-[3px] w-[3px] rounded-full bg-black" /></button>
            </div>
            <div className={`flex flex-1 bg-[#252525] text-[10px] text-[#999] ${UI}`}>
                <div className="flex w-[70px] flex-col">
                    <p className="w-[94px] pt-px text-center leading-4">-7.09dB</p>
                    <div className="flex justify-around leading-4"><span>-inf</span><span>-inf</span></div>
                    <div className="flex justify-between font-['Liberation_Sans',sans-serif] font-bold text-[#505050]">
                        <ul className="w-5">{SCALE_LEFT.map((t, i) => <li key={i} className="h-[12px] leading-[10px] odd:h-[11px]">{t}</li>)}</ul>
                        <ul className="pt-[4px]">{SCALE_MID.map((t) => <li key={t} className="h-[23px] text-center leading-[12px]">{t}</li>)}</ul>
                        <ul className="w-5 text-right">{SCALE_RIGHT.map((t, i) => <li key={i} className="h-[12px] leading-[10px] odd:h-[11px]">{t}</li>)}</ul>
                    </div>
                    <div className="flex h-3 shrink-0 items-center justify-around bg-[#1e1e1e] font-bold text-[#35a874]"><span>L-S</span><span>-inf</span></div>
                    <p className="w-[94px] text-center text-[11px] leading-[18px] text-[#e0e0e0]">MASTER</p>
                </div>
                <Fader />
            </div>
        </div>
        <div className="ml-auto flex w-[26px] flex-col items-center pt-[6px]">
            <button aria-label="Mono" className="grid h-5 w-5 place-items-center rounded-sm border border-[#555] bg-[#8a8c8c]">
                <svg viewBox="0 0 16 12" className="h-3 w-4" fill="none" stroke="#555"><circle cx="5.500" cy="6" r="4" /><circle cx="10.500" cy="6" r="4" /></svg>
            </button>
            <SmallLabel>MONO</SmallLabel>
            <div className="mt-[2px] flex w-5 flex-col gap-[2px] text-[11px] leading-[17px]">
                <button className="h-[19px] border border-black bg-[#363636] text-[#d56565]">M</button>
                <button className="h-[19px] border border-black bg-[#363636] text-[#cdb95c]">S</button>
            </div>
            <button aria-label="Route" className="mt-[6px] h-5 w-5 shrink-0 overflow-hidden rounded-sm border border-black bg-[#262c30]">
                <svg viewBox="0 0 18 18" className="h-[18px] w-[18px]"><path d="M3 0h4L2 18h-4z" fill="#20bd9b" /><path d="M9 0h5L9 18H4z" fill="#ffe100" /><path d="M16 0h5l-5 18h-5z" fill="#33475a" /></svg>
            </button>
            <SmallLabel>ROUTE</SmallLabel>
            <div className="mt-1 flex w-5 flex-col overflow-hidden rounded-sm border border-[#14513f] text-[11px] leading-[17px]">
                <button className="h-[18px] bg-[#2a7a5c] text-[#6ee5b5]">FX</button>
                <button aria-label="Master FX bypass" className="grid h-4 place-items-center bg-[#45c493] text-[#17573f]"><Power className="h-[9px] w-[9px]" /></button>
            </div>
            <button aria-label="Trim" className="mt-[6px] grid h-5 w-5 shrink-0 place-items-center rounded-sm border border-[#555] bg-[#8a8c8c] text-[#3f3f3f]"><Trim className="h-[10px] w-[14px]" /></button>
            <SmallLabel>TRIM</SmallLabel>
        </div>
    </section>
);

const Performance = () => (
    <div className="ml-px mt-[6px] flex flex-1">
        <div className="flex-1 whitespace-nowrap rounded-none bg-[#aaafae] pl-[5px] pt-[6px] font-['Roboto',sans-serif] text-[11px] leading-[13px] text-[#252525]">
            <p>CPU: 0.12c</p>
            <p>RT CPU: 2.2%</p>
            <p>RT x/r: 0 M x/r: 0</p>
        </div>
        <div className="flex w-[6px] justify-center rounded-br-lg bg-[#808987] py-1"><span className="w-px bg-[#252828]" /></div>
    </div>
);

const Dock = () => (
    <aside className="flex w-[133px] shrink-0 flex-col">
        <DockToolbar />
        <FxPanel />
        <Master />
        <div className="ml-px flex h-[6px] items-center bg-[#808987] px-1"><span className="h-px w-full bg-[#252828]" /></div>
        <Performance />
    </aside>
);

// ============================================================================
// APP
// ============================================================================
const App = () => (
    <div className="flex min-h-screen bg-gradient-to-b from-[#4d555c] via-[#4a525a] to-[#384145] pb-[6px] pr-[151px]">
        <div className="flex min-w-0 flex-1 flex-col rounded-lg border border-[#575d61] bg-[#333333] font-['Liberation_Sans',sans-serif] [&>header]:rounded-t-lg">
            <TitleBar />
            <MenuBar />
            <TabBar />
            <Transport />
            <div className="flex flex-1">
                <div className="flex w-[399px] shrink-0 flex-col">
                    <Toolbar />
                    <TrackPanel />
                    <footer className={`mr-2 mt-auto h-[19px] border-t border-[#666] pl-[2px] text-[10px] leading-4 text-[#8a8a8a] ${UI}`}>
                        Track: Render selected area of tracks to stereo stem tracks (and mute originals)
                    </footer>
                </div>
                <Arrange />
                <Dock />
            </div>
        </div>
    </div>
);

export default App;
